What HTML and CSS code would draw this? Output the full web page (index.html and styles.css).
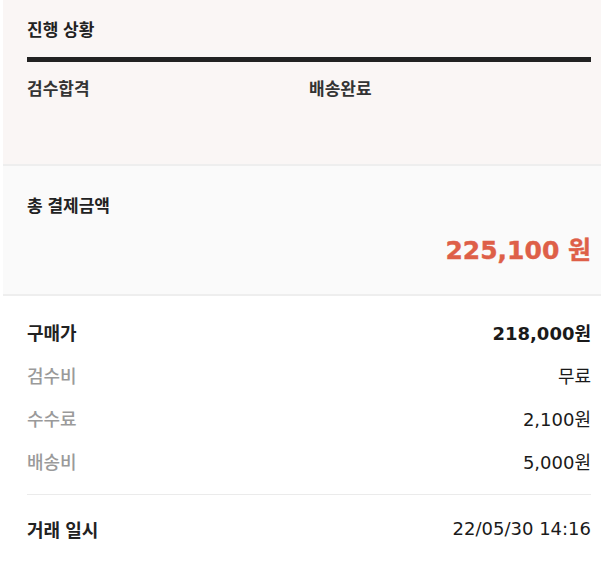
FILE: index.html
```html
<!DOCTYPE html>
<html lang="ko">
<head>
<meta charset="utf-8">
<link rel="stylesheet" href="styles.css">
</head>
<body>
<div class="page">
  <section class="progress">
    <h2 class="progress-title">진행 상황</h2>
    <div class="progress-bar"></div>
    <div class="progress-steps">
      <span class="step">검수합격</span>
      <span class="step">배송완료</span>
    </div>
  </section>
  <section class="total">
    <h3 class="total-title">총 결제금액</h3>
    <div class="total-amount">225,100 원</div>
  </section>
  <section class="details">
    <div class="row"><span class="label strong">구매가</span><span class="value bold">218,000원</span></div>
    <div class="row"><span class="label">검수비</span><span class="value">무료</span></div>
    <div class="row"><span class="label">수수료</span><span class="value">2,100원</span></div>
    <div class="row"><span class="label">배송비</span><span class="value">5,000원</span></div>
    <div class="divider"></div>
    <div class="row date-row"><span class="label strong">거래 일시</span><span class="value">22/05/30 14:16</span></div>
  </section>
</div>
</body>
</html>
```

FILE: styles.css
```css
* { box-sizing: border-box; }
html, body { margin: 0; padding: 0; background: #fff; }
body {
  font-family: "Noto Sans CJK KR", "Noto Sans", sans-serif;
  color: #222;
}
.page { padding-left: 3px; }
.progress {
  background: #faf6f5;
  height: 166px;
  padding: 17px 10px 0 24px;
  border-bottom: 2px solid #eeeeee;
}
.progress-title {
  margin: 0;
  font-size: 17px;
  line-height: 24px;
  font-weight: 700;
  color: #222;
}
.progress-bar {
  margin-top: 16px;
  height: 5px;
  background: #222;
}
.progress-steps {
  display: flex;
  margin-top: 14px;
}
.step {
  flex: 1;
  font-size: 17px;
  line-height: 24px;
  font-weight: 700;
  color: #333;
}
.total {
  background: #fafafa;
  height: 130px;
  padding: 27px 10px 0 24px;
  border-bottom: 2px solid #eeeeee;
}
.total-title {
  margin: 0;
  font-size: 17px;
  line-height: 24px;
  font-weight: 700;
  color: #222;
}
.total-amount {
  margin-top: 17px;
  text-align: right;
  font-family: "DejaVu Sans", "Noto Sans CJK KR", sans-serif;
  font-size: 25px;
  line-height: 34px;
  font-weight: 700;
  color: #de5f48;
  -webkit-text-stroke: 0.4px #de5f48;
}
.details {
  padding: 14px 10px 0 24px;
}
.row {
  display: flex;
  justify-content: space-between;
  align-items: center;
  height: 43px;
  font-size: 18px;
}
.label { color: #9a9a9a; font-weight: 500; }
.label.strong { color: #222; font-weight: 600; }
.value {
  font-family: "DejaVu Sans", "Noto Sans CJK KR", sans-serif;
  color: #1a1a1a;
  font-weight: 400;
}
.value.bold { font-weight: 700; }
.divider {
  height: 1px;
  background: #ebebeb;
  margin: 12px 0 12px;
}
```
